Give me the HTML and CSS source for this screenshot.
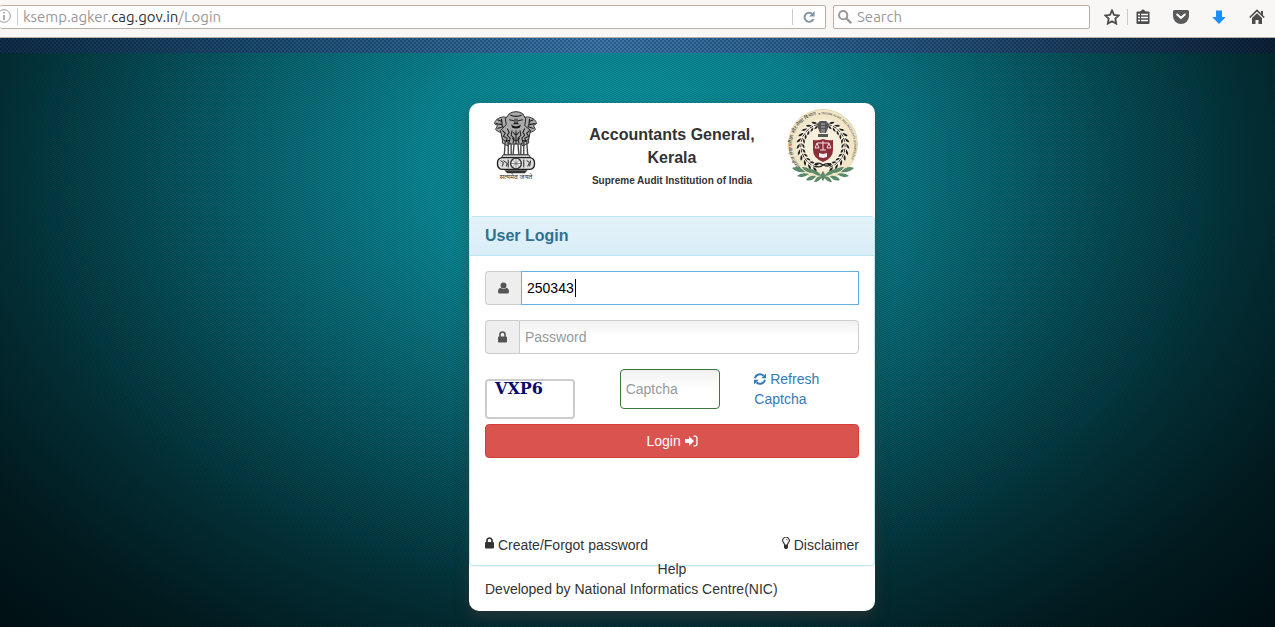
FILE: index.html
```html
<!DOCTYPE html>
<html lang="en">
<head>
  <meta charset="UTF-8">
  <meta name="viewport" content="width=device-width, initial-scale=1.0">
  <title>User Login</title>
  <link rel="stylesheet" href="styles.css">
</head>
<body>

  <!-- Browser toolbar -->
  <header class="toolbar">
    <div class="urlbar">
      <button class="icon-btn info" type="button" aria-label="Site information">
        <svg width="14" height="14" viewBox="0 0 14 14" fill="none" stroke="#999"><circle cx="7" cy="7" r="6.3"/><path d="M7 6v5M7 3v1.6" stroke-width="1.6"/></svg>
      </button>
      <div class="address" role="textbox" contenteditable="true" spellcheck="false" aria-label="Address">ksemp.agker.<span class="domain">cag.gov.in</span>/Login</div>
      <button class="icon-btn reload" type="button" aria-label="Reload">
        <svg width="12" height="12" viewBox="0 0 12 12"><path d="M9.6 3.2A4.6 4.6 0 1 0 10.4 8" fill="none" stroke="#8496a3" stroke-width="2"/><path d="M11.6 0v5.6H6z" fill="#8496a3"/></svg>
      </button>
    </div>
    <div class="searchbar">
      <svg width="14" height="14" viewBox="0 0 14 14" fill="none" stroke="#999"><circle cx="5.2" cy="5.2" r="4.1" stroke-width="2"/><path d="M8.2 8.2l5 5" stroke-width="2.4"/></svg>
      <input type="text" placeholder="Search" aria-label="Search">
    </div>
    <div class="tools">
      <button class="icon-btn bookmark" type="button" aria-label="Bookmark">
        <svg width="16" height="16" viewBox="0 0 16 16"><path d="M8 1.4l2 4.4 4.9.6-3.6 3.3.9 4.9L8 12.2l-4.2 2.4.9-4.9L1.1 6.4 6 5.8z" fill="none" stroke="#4c4c4c" stroke-width="1.8"/></svg>
      </button>
      <button class="icon-btn" type="button" aria-label="Reading list">
        <svg width="16" height="16" viewBox="0 0 16 16"><path d="M2.5 2.5H5L8 .2l3 2.3h2.5a1 1 0 0 1 1 1V14a1 1 0 0 1-1 1h-11a1 1 0 0 1-1-1V3.500a1 1 0 0 1 1-1z" fill="#4c4c4c"/><path d="M3 5.500h2M6 5.500h7M3 8.500h2M6 8.500h7M3 11.500h2M6 11.500h7" stroke="#fff" stroke-width="1.600"/></svg>
      </button>
      <button class="icon-btn" type="button" aria-label="Pocket">
        <svg width="16" height="16" viewBox="0 0 16 16"><path d="M1.500 1h13A1.500 1.500 0 0 1 16 2.500V7a8 8 0 0 1-16 0V2.500A1.500 1.500 0 0 1 1.500 1z" fill="#5a5a5a"/><path d="M4.200 5.500L8 9l3.800-3.500" fill="none" stroke="#fff" stroke-width="2" stroke-linecap="round"/></svg>
      </button>
      <button class="icon-btn" type="button" aria-label="Downloads">
        <svg width="16" height="16" viewBox="0 0 16 16"><path d="M5 1.500h6V8h3.800L8 15 1.200 8H5z" fill="#1990ff"/></svg>
      </button>
      <button class="icon-btn" type="button" aria-label="Home">
        <svg width="16" height="16" viewBox="0 0 16 16"><path d="M.8 8.500L8 1.500l7.200 7" fill="none" stroke="#4c4c4c" stroke-width="1.700"/><path d="M12 2h2v4.500l-2-2zM8 4.200l5 4.800v6H9.500v-4h-3v4H3V9z" fill="#4c4c4c"/></svg>
      </button>
    </div>
  </header>

  <main class="page">
    <div class="topband"></div>

    <div class="card">
      <div class="card-head">
        <div class="logo">
          <svg class="emblem" width="46" height="70" viewBox="0 0 46 72" role="img" aria-label="State emblem">
            <!-- side lions -->
            <path d="M10 6C4 7 1 10 1 13l3 2-2 4c3 3 5 3 7 3v11l6 3 5-8V8zM35 6c6 1 9 4 9 7l-3 2 2 4c-3 3-5 3-7 3v11l-6 3-5-8V8z" fill="#aaa" stroke="#333"/>
            <path d="M4 9l5 2M2 13l7 1M4 18l6-2M8 8l1 9M41 9l-5 2M43 13l-7 1M41 18l-6-2M37 8l-1 9" stroke="#222" stroke-width="1.200"/>
            <!-- front lion -->
            <path d="M16 3c4-3 10-3 14 0l3 5-1 7 6 5-2 9-8 5h-10l-9-5-2-9 6-6-1-6z" fill="#aaa" stroke="#222"/>
            <path d="M17 4c3 2 9 2 12 0M16 9l5 1M25 10l5-1M22 8v4l-1 1h4l-1-1V8" fill="none" stroke="#222" stroke-width="1.100"/>
            <path d="M18 14q5 4 10 0l-1 3q-4 2-8 0z" fill="#111"/>
            <path d="M9 20l3 3-2 3 4 2-1 3 4-1M37 20l-3 3 2 3-4 2 1 3-4-1M14 18l2 4-2 3 3 3-1 4M32 18l-2 4 2 3-3 3 1 4M19 20l-1 5 3 3-1 5M27 20l1 5-3 3 1 5M23 20v14M20 22l3 3 3-3M19 28l4 3 4-3" fill="none" stroke="#222" stroke-width="1.100"/>
            <path d="M12 31l-1 14M15 33v12M18 34v11M21 34l-1 11M25 34l1 11M28 34v11M31 33v12M34 31l1 14" stroke="#444" stroke-width="1.400"/>
            <!-- abacus -->
            <path d="M10 45h26l2 3H8z" fill="#ccc" stroke="#222"/>
            <rect x="4" y="48" width="38" height="12" rx="5" fill="#ddd" stroke="#222" stroke-width="1.400"/>
            <circle cx="23" cy="54" r="5.500" fill="#eee" stroke="#333" stroke-width="1.400"/>
            <path d="M23 49v10M18 54h10M19.500 50.500l7 7M26.500 50.500l-7 7" stroke="#555" stroke-width=".6"/>
            <path d="M7 51l3 2-1 4M10 51l4 3-1 3M34 51l3 2-2 4M38 51l-1 6M15 50v8M31 50v8" fill="none" stroke="#222"/>
            <path d="M11 61h24l-3 3H14z" fill="#333"/>
            <text x="23" y="70" text-anchor="middle" font-size="7">सत्यमेव जयते</text>
          </svg>
        </div>
        <h1 class="title">Accountants General, Kerala <small>Supreme Audit Institution of India</small></h1>
        <div class="logo logo-right">
          <svg width="72" height="76" viewBox="0 0 72 76" role="img" aria-label="Department seal">
            <defs>
              <path id="ring" d="M16 61A31 31 0 1 1 56 61"/>
              <g id="leaf">
                <path d="M36 14.500q3-3 5.500-2.500-1 3.500-5.500 2.500zM36 17q3 0 4.500 2.500-3.500 1-4.500-2.500z"/>
                <path d="M35.500 16h4" stroke="#222" stroke-width=".8"/>
              </g>
            </defs>
            <circle cx="36" cy="36" r="34.500" fill="#f1e6c8" stroke="#e5d6ae"/>
            <circle cx="36" cy="37" r="26" fill="#f8f0dc"/>
            <text class="ring-text" font-size="5"><textPath href="#ring" startOffset="2">भारतीय लेखापरीक्षा और लेखा विभाग <tspan font-size="3">★ INDIAN AUDIT AND ACCOUNTS DEPARTMENT</tspan></textPath></text>
            <!-- wreath -->
            <g fill="#222">
              <use href="#leaf" transform="rotate(14 36 38)"/><use href="#leaf" transform="rotate(28 36 38)"/><use href="#leaf" transform="rotate(42 36 38)"/><use href="#leaf" transform="rotate(56 36 38)"/><use href="#leaf" transform="rotate(70 36 38)"/><use href="#leaf" transform="rotate(84 36 38)"/><use href="#leaf" transform="rotate(98 36 38)"/><use href="#leaf" transform="rotate(112 36 38)"/><use href="#leaf" transform="rotate(126 36 38)"/><use href="#leaf" transform="rotate(140 36 38)"/><use href="#leaf" transform="rotate(154 36 38)"/>
              <g transform="matrix(-1 0 0 1 72 0)">
                <use href="#leaf" transform="rotate(14 36 38)"/><use href="#leaf" transform="rotate(28 36 38)"/><use href="#leaf" transform="rotate(42 36 38)"/><use href="#leaf" transform="rotate(56 36 38)"/><use href="#leaf" transform="rotate(70 36 38)"/><use href="#leaf" transform="rotate(84 36 38)"/><use href="#leaf" transform="rotate(98 36 38)"/><use href="#leaf" transform="rotate(112 36 38)"/><use href="#leaf" transform="rotate(126 36 38)"/><use href="#leaf" transform="rotate(140 36 38)"/><use href="#leaf" transform="rotate(154 36 38)"/>
              </g>
            </g>
            <!-- lion capital and shield -->
            <path d="M33 13h6l3 3-1 4-2 5h-6l-2-5-1-4zM31 26h10v3H31z" fill="#555"/>
            <path d="M34 16h4M34 19h4M35 21v4M37 21v4" stroke="#ddd" stroke-width=".7"/>
            <path d="M26 32q5 1 10-1 5 2 10 1v10q0 8-10 12-10-4-10-12z" fill="#8c2f3b"/>
            <path d="M36 33v9M30 35h12M30 35l-2 5h4zM42 35l-2 5h4zM33 42h6" fill="none" stroke="#f4dede" stroke-width="1"/>
            <path d="M32 45l4 1 4-1v4l-4 1-4-1z" fill="#eee"/>
            <path d="M28 56q4-2 8 1 4 2 8 0M28 58q5 2 8-1 4-2 8-1" fill="none" stroke="#222" stroke-width="1.300"/>
            <!-- green laurel -->
            <g fill="#5b8a69">
              <path id="laurel" d="M35 68Q29 61 23 61q3 7 12 7zM27 65Q21 58 15 59q3 6 12 6zM18 64Q12 57 5 60q4 5 13 4zM22 66q-8-2-12 2 6 3 12-2zM29 68q-7-1-10 4 6 2 10-4zM35 68q-6 0-8 6 6 0 8-6z"/>
              <use href="#laurel" transform="matrix(-1 0 0 1 72 0)"/>
              <path d="M36 63q4 5 0 10-4-5 0-10z"/>
            </g>
          </svg>
        </div>
      </div>

      <section class="panel">
        <h2 class="panel-heading">User Login</h2>
        <form class="panel-body">
          <div class="input-group">
            <label class="addon" for="user" aria-label="User name">
              <svg width="11" height="12" viewBox="0 0 12 12" fill="#555"><circle cx="6" cy="3.200" r="3.200"/><path d="M3 5.600a4 4 0 0 0 6 0c2 .4 3 2 3 4.400Q12 12 10 12H2q-2 0-2-2c0-2.400 1-4 3-4.400z"/></svg>
            </label>
            <input class="control focused" id="user" type="text" value="250343">
          </div>
          <div class="input-group">
            <label class="addon" for="password" aria-label="Password">
              <svg width="9" height="12" viewBox="0 0 9 12"><path d="M2 6V3.500a2.500 2.500 0 0 1 5 0V6" fill="none" stroke="#555" stroke-width="1.600"/><rect y="5.500" width="9" height="6" rx="1" fill="#555"/></svg>
            </label>
            <input class="control" id="password" type="password" placeholder="Password">
          </div>
          <div class="captcha-row">
            <div class="captcha-image">VXP6</div>
            <input class="control captcha-input" type="text" placeholder="Captcha" aria-label="Captcha">
            <a class="refresh" href="#"><svg width="12" height="12" viewBox="0 0 12 12"><path d="M1 5.200A5 5 0 0 1 9.500 2.800M11 6.800A5 5 0 0 1 2.500 9.200" fill="none" stroke="#337ab7" stroke-width="2"/><path d="M12 .5v4.700H7.300zM0 11.500V6.800h4.700z" fill="#337ab7"/></svg> Refresh Captcha</a>
          </div>
          <button class="login-btn" type="submit">Login <svg width="13" height="12" viewBox="0 0 13 12"><path d="M0 4h4V1l5 5-5 5V8H0z" fill="#fff"/><path d="M8.500 1.200H10q2 0 2 2v5.600q0 2-2 2H8.500" fill="none" stroke="#fff" stroke-width="1.300"/></svg></button>
          <div class="links">
            <a href="#"><svg width="9" height="12" viewBox="0 0 9 12"><path d="M2 6V3.500a2.500 2.500 0 0 1 5 0V6" fill="none" stroke="#333" stroke-width="1.700"/><rect y="5" width="9" height="6.500" rx="1" fill="#333"/></svg> Create/Forgot password</a>
            <a href="#"><svg width="8" height="12" viewBox="0 0 8 12"><path d="M2.500 8Q2.500 6.500 1.400 5.500A3.300 3.300 0 1 1 6.600 5.500Q5.500 6.500 5.500 8z" fill="none" stroke="#333" stroke-width="1.100"/><path d="M2 8h4v2.500L5 12H3l-1-1.500z" fill="#333"/><path d="M4 2.200q1.300 0 1.400 1.200" fill="none" stroke="#333" stroke-width=".7"/></svg> Disclaimer</a>
          </div>
        </form>
      </section>

      <footer class="card-foot">
        <a class="help" href="#">Help</a>
        <p>Developed by National Informatics Centre(NIC)</p>
      </footer>
    </div>
  </main>

</body>
</html>
```
FILE: styles.css
```css
* {
  box-sizing: border-box;
}

body {
  margin: 0;
  min-height: 100vh;
  display: flex;
  flex-direction: column;
  font-family: "Liberation Sans", Arial, sans-serif;
  font-size: 14px;
  line-height: 20px;
  color: #333;
}

a {
  color: #333;
  text-decoration: none;
}

input,
button {
  font: inherit;
}

/* Browser toolbar */
.toolbar {
  display: flex;
  align-items: center;
  height: 38px;
  padding: 0 10px 4px 0;
  background: #f9f7f5;
  border-bottom: 1px solid #b7aea4;
  font-family: Ubuntu, "Noto Sans", sans-serif;
  font-size: 15px;
}

.urlbar,
.searchbar {
  display: flex;
  align-items: center;
  height: 24px;
  background: #fff;
  border: 1px solid #bfb0a5;
  border-radius: 2px;
}

.urlbar {
  flex: 1;
  border-left: 0;
  margin-right: 7px;
}

.icon-btn {
  display: flex;
  padding: 0;
  border: 0;
  background: none;
}

.info {
  width: 20px;
  height: 16px;
  margin-left: -3px;
  padding-top: 1px;
  border-right: 1px solid #ccc;
  box-sizing: content-box;
}

.address {
  flex: 1;
  padding-left: 5px;
  color: #999;
  outline: none;
  white-space: nowrap;
}

.domain {
  color: #333;
}

.reload {
  width: 33px;
  height: 16px;
  align-items: center;
  justify-content: center;
  border-left: 1px solid #ccc;
}

.searchbar {
  width: 257px;
  padding-left: 4px;
}

.searchbar input {
  flex: 1;
  min-width: 0;
  padding: 0 5px;
  border: 0;
  outline: none;
  background: none;
}

.searchbar input::placeholder {
  color: #999;
}

.tools {
  display: flex;
  gap: 22px;
  padding-left: 14px;
}

.bookmark {
  width: 24px;
  margin-right: -15px;
  border-right: 1px solid #ccc;
}

/* Page with woven texture */
.page {
  flex: 1;
  display: flex;
  flex-direction: column;
  align-items: center;
  padding-bottom: 16px;
  background:
    repeating-conic-gradient(rgba(0, 10, 20, 0.16) 0 25%, transparent 0 50%) 0 0 / 4px 2px,
    radial-gradient(ellipse 56% 88% at 49% 21%, #0c99a4 0%, #0a8894 28%, #066772 50%, #04474f 72%, #033036 88%, #011b1f 108%, #001014 125%);
  background-color: #001014;
}

.topband {
  align-self: stretch;
  height: 15px;
  margin-bottom: 50px;
  background:
    repeating-conic-gradient(rgba(0, 10, 20, 0.25) 0 25%, transparent 0 50%) 0 0 / 4px 4px,
    linear-gradient(90deg, #0f2d48, #1e4f76 22%, #3c78ac 47%, #2c6090 65%, #1b3d5e 85%, #0c2138);
}

/* Login card */
.card {
  width: 406px;
  margin-left: 69px;
  padding: 0 1px 12px;
  background: #fff;
  border-radius: 10px;
  box-shadow: 0 6px 14px rgba(70, 60, 60, 0.5);
}

.card-head {
  display: flex;
  min-height: 113px;
  padding: 0 15px;
}

.logo {
  width: 93px;
  padding: 8px 0 0 8px;
}

.logo-right {
  display: flex;
  justify-content: flex-end;
  align-items: flex-start;
  padding: 5px 0 0;
}

.emblem text,
.ring-text {
  font-family: "Noto Sans", sans-serif;
  fill: #333;
}

.title {
  flex: 1;
  margin: 20px 0 0;
  text-align: center;
  font-size: 16px;
  line-height: 23px;
}

.title small {
  display: block;
  font-size: 10px;
}

.panel {
  margin: 0 -1px;
  border: 1px solid #bce8f1;
  border-radius: 4px;
  box-shadow: 0 1px 1px rgba(0, 0, 0, 0.05);
}

.panel-heading {
  margin: 0;
  padding: 9px 15px;
  background: linear-gradient(#e4f2f9, #d9edf7);
  border-bottom: 1px solid #bce8f1;
  color: #31708f;
  font-size: 16px;
}

.panel-body {
  padding: 15px 15px 10px;
}

.input-group {
  display: flex;
  height: 34px;
  margin-bottom: 15px;
}

.addon {
  display: flex;
  align-items: center;
  padding: 0 12px;
  background: #eee;
  border: 1px solid #ccc;
  border-right: 0;
  border-radius: 4px 0 0 4px;
}

.control {
  flex: 1;
  min-width: 0;
  padding: 0 5px;
  border: 1px solid #ccc;
  border-radius: 0 4px 4px 0;
  background: linear-gradient(#f0f0f0, #fff 50%);
  outline: none;
  color: #000;
}

.control::placeholder {
  color: #999;
}

.focused {
  border-color: #66afe9;
  border-radius: 0;
  background: linear-gradient(#000, #000) 53px center / 1px 18px no-repeat #fff;
}

.captcha-row {
  display: grid;
  grid-template-columns: 1fr 1fr 1fr;
  gap: 30px;
  align-items: start;
  margin-bottom: 5px;
}

.captcha-image {
  width: 90px;
  height: 40px;
  margin-top: 10px;
  padding-left: 8px;
  border: 2px solid #ccc;
  border-radius: 4px;
  color: #0a0a6e;
  font: bold 16px/16px "DejaVu Serif", serif;
}

.captcha-input {
  width: 100px;
  height: 40px;
  border-color: #3c763d;
  border-radius: 4px;
}

.refresh {
  color: #337ab7;
}

.refresh svg,
.login-btn svg {
  vertical-align: -1px;
}

.login-btn {
  display: block;
  width: 100%;
  height: 34px;
  border: 1px solid #d43f3a;
  border-radius: 4px;
  background: #d9534f;
  color: #fff;
}

.links {
  display: flex;
  justify-content: space-between;
  margin-top: 77px;
}

.links svg {
  vertical-align: 1px;
}

/* Help sits across the lower edge of the panel */
.card-foot {
  margin-top: -7px;
  padding: 0 15px;
}

.help {
  display: block;
  text-align: center;
}

.card-foot p {
  margin: 0;
}
```
